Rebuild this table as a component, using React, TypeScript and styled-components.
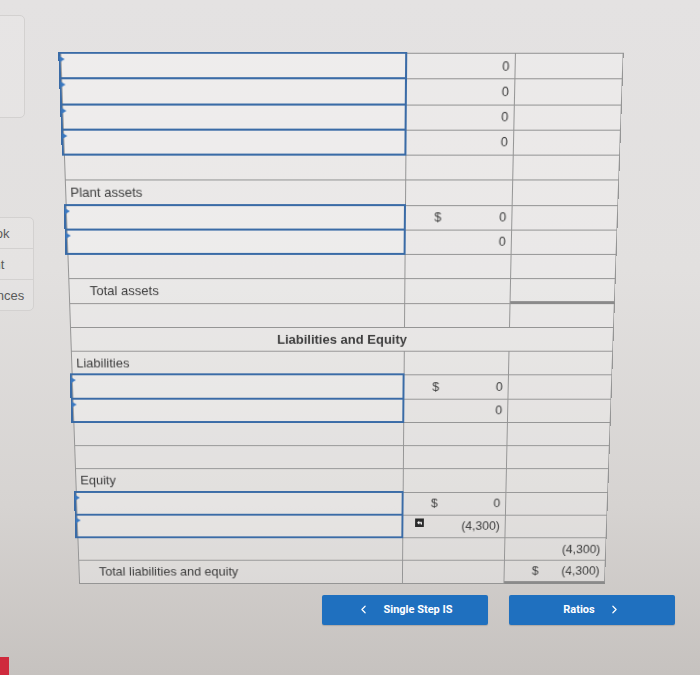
import React from "react";
import styled, { createGlobalStyle, css } from "styled-components";
import { ChevronLeft, ChevronRight } from "lucide-react";

const Global = createGlobalStyle`
  html, body {
    margin: 0;
    padding: 0;
    width: 700px;
    height: 675px;
    overflow: hidden;
    background: linear-gradient(180deg, #e4e2e2 0%, #e2e0df 40%, #d6d3d1 75%, #c6c2bf 100%);
    font-family: "Liberation Sans", Arial, sans-serif;
    color: #3c3c3c;
  }
  #root { height: 675px; }
`;

const Page = styled.div`
  display: flex;
  height: 675px;
`;

const Side = styled.aside`
  width: 32px;
  flex: 0 0 32px;
  display: flex;
  flex-direction: column;
  padding-top: 15px;
  box-sizing: border-box;
`;

const SideBox = styled.div<{ $h: number }>`
  margin-left: -60px;
  width: 85px;
  height: ${(p) => p.$h}px;
  border: 1px solid #d3d1d0;
  border-radius: 5px;
  box-sizing: border-box;
  background: rgba(255, 255, 255, 0.12);
`;

const NavBox = styled.nav`
  margin-left: -52px;
  margin-top: 99px;
  width: 84px;
  border: 1px solid #d3d1d0;
  border-radius: 5px;
  background: rgba(255, 255, 255, 0.12);
  display: flex;
  flex-direction: column;
  overflow: hidden;
`;

const NavItem = styled.div`
  height: 30px;
  display: flex;
  align-items: center;
  justify-content: center;
  font-size: 13px;
  color: #5a5a5a;
  white-space: nowrap;
  & + & { border-top: 1px solid #d3d1d0; }
`;

const RedTab = styled.div`
  margin-top: auto;
  width: 9px;
  height: 18px;
  background: #cf2a3d;
`;

const Main = styled.main`
  flex: 1;
  display: flex;
  flex-direction: column;
  padding-top: 60px;
  padding-left: 38px;
  box-sizing: border-box;
`;

const Table = styled.div`
  width: 543px;
  border-top: 1px solid #959595;
  border-left: 1px solid #959595;
  transform: perspective(1000px) rotateX(-7.4deg);
  transform-origin: 50% 50%;
`;

const Row = styled.div`
  display: grid;
  grid-template-columns: 334px 105px 104px;
  height: 24.25px;
`;

const Cell = styled.div<{ $total?: boolean; $span?: boolean }>`
  position: relative;
  border-right: 1px solid #959595;
  border-bottom: 1px solid #959595;
  box-sizing: border-box;
  background: rgba(255, 255, 255, 0.28);
  display: flex;
  align-items: center;
  font-size: 13px;
  color: #3c3c3c;
  ${(p) =>
    p.$total &&
    css`
      border-bottom: 3px solid #8a8a8a;
    `}
  ${(p) =>
    p.$span &&
    css`
      grid-column: 1 / -1;
      justify-content: center;
      font-weight: 700;
    `}
`;

const Label = styled.span<{ $indent?: boolean }>`
  padding-left: ${(p) => (p.$indent ? 20 : 4)}px;
`;

const InputBox = styled.div`
  position: absolute;
  inset: -2px -1px -1px -3px;
  border: 2px solid #3a6ba6;
  box-sizing: border-box;
  background: rgba(255, 255, 255, 0.15);
  &::before {
    content: "";
    position: absolute;
    left: -1px;
    top: 2px;
    border-left: 5px solid #3a78c0;
    border-top: 3px solid transparent;
    border-bottom: 3px solid transparent;
  }
`;

const Amount = styled.div`
  width: 100%;
  display: flex;
  align-items: center;
  padding: 0 5px 0 28px;
  box-sizing: border-box;
  font-size: 12.5px;
`;

const Dollar = styled.span``;

const Value = styled.span`
  margin-left: auto;
`;

const IconWrap = styled.span`
  display: inline-flex;
  margin-left: -16px;
  margin-top: -8px;
`;

const ButtonRow = styled.div`
  display: flex;
  justify-content: flex-end;
  gap: 21px;
  padding-right: 25px;
  margin-top: 0;
`;

const NavButton = styled.button`
  width: 166px;
  height: 30px;
  border: none;
  border-radius: 2px;
  background: #1f70bf;
  color: #ffffff;
  font-family: Roboto, "Liberation Sans", sans-serif;
  font-weight: 700;
  font-size: 11px;
  display: flex;
  align-items: center;
  justify-content: center;
  gap: 13px;
  box-shadow: 0 1px 1px rgba(0, 0, 0, 0.15);
  padding: 0;
`;

type RowDef =
  | { kind: "input"; dollar?: boolean; v2?: string; icon?: boolean }
  | { kind: "blank"; v3?: string }
  | { kind: "label"; text: string; indent?: boolean; total?: boolean; dollar3?: boolean; v3?: string }
  | { kind: "header"; text: string };

const rows: RowDef[] = [
  { kind: "input", v2: "0" },
  { kind: "input", v2: "0" },
  { kind: "input", v2: "0" },
  { kind: "input", v2: "0" },
  { kind: "blank" },
  { kind: "label", text: "Plant assets" },
  { kind: "input", dollar: true, v2: "0" },
  { kind: "input", v2: "0" },
  { kind: "blank" },
  { kind: "label", text: "Total assets", indent: true, total: true },
  { kind: "blank" },
  { kind: "header", text: "Liabilities and Equity" },
  { kind: "label", text: "Liabilities" },
  { kind: "input", dollar: true, v2: "0" },
  { kind: "input", v2: "0" },
  { kind: "blank" },
  { kind: "blank" },
  { kind: "label", text: "Equity" },
  { kind: "input", dollar: true, v2: "0" },
  { kind: "input", icon: true, v2: "(4,300)" },
  { kind: "blank", v3: "(4,300)" },
  { kind: "label", text: "Total liabilities and equity", indent: true, total: true, dollar3: true, v3: "(4,300)" },
];

const UndoIcon = () => (
  <svg width="9" height="9" viewBox="0 0 9 9">
    <rect width="9" height="9" fill="#2a2a2a" />
    <path d="M2 4.5 L4.2 2.6 L4.2 3.7 L7 3.7 L7 6.4 L5.8 6.4 L5.8 5.3 L4.2 5.3 L4.2 6.4 Z" fill="#ffffff" />
  </svg>
);

const AmountCell: React.FC<{ dollar?: boolean; value?: string; icon?: boolean; total?: boolean }> = ({
  dollar,
  value,
  icon,
  total,
}) => (
  <Cell $total={total}>
    <Amount>
      {icon && (
        <IconWrap>
          <UndoIcon />
        </IconWrap>
      )}
      {dollar && <Dollar>$</Dollar>}
      {value && <Value>{value}</Value>}
    </Amount>
  </Cell>
);

const TableRow: React.FC<{ def: RowDef }> = ({ def }) => {
  switch (def.kind) {
    case "header":
      return (
        <Row>
          <Cell $span>{def.text}</Cell>
        </Row>
      );
    case "input":
      return (
        <Row>
          <Cell>
            <InputBox />
          </Cell>
          <AmountCell dollar={def.dollar} value={def.v2} icon={def.icon} />
          <AmountCell />
        </Row>
      );
    case "label":
      return (
        <Row>
          <Cell>
            <Label $indent={def.indent}>{def.text}</Label>
          </Cell>
          <AmountCell />
          <AmountCell dollar={def.dollar3} value={def.v3} total={def.total} />
        </Row>
      );
    default:
      return (
        <Row>
          <Cell />
          <AmountCell />
          <AmountCell value={def.v3} />
        </Row>
      );
  }
};

export default function App() {
  return (
    <>
      <Global />
      <Page>
        <Side>
          <SideBox $h={103} />
          <NavBox>
            <NavItem>eBook</NavItem>
            <NavItem>Print</NavItem>
            <NavItem>References</NavItem>
          </NavBox>
          <RedTab />
        </Side>
        <Main>
          <Table>
            {rows.map((r, i) => (
              <TableRow key={i} def={r} />
            ))}
          </Table>
          <ButtonRow>
            <NavButton>
              <ChevronLeft size={13} strokeWidth={2.2} />
              <span>Single Step IS</span>
            </NavButton>
            <NavButton>
              <span>Ratios</span>
              <ChevronRight size={13} strokeWidth={2.2} />
            </NavButton>
          </ButtonRow>
        </Main>
      </Page>
    </>
  );
}
